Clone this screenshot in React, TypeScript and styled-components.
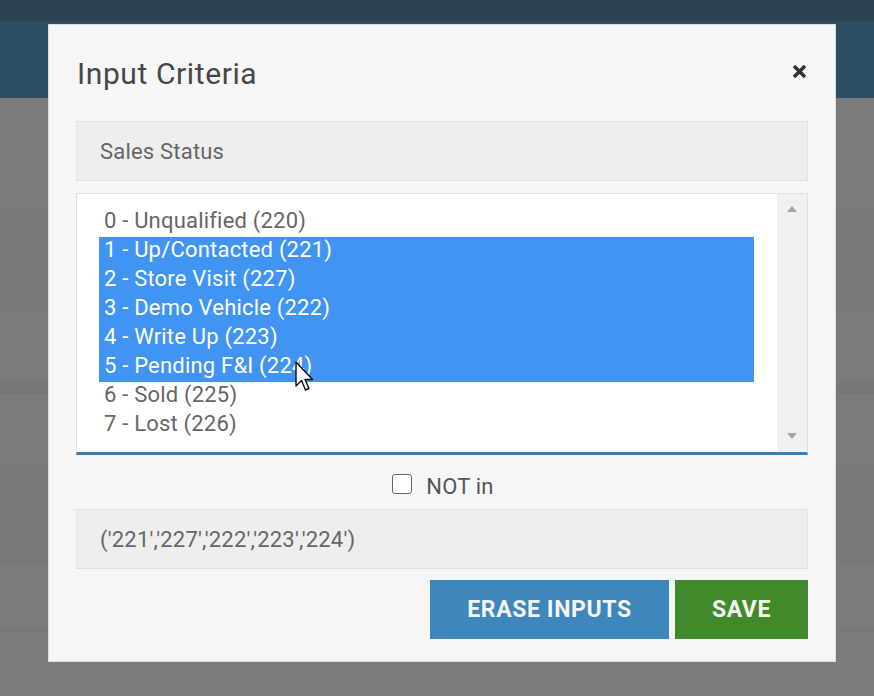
import React from "react";
import styled, { createGlobalStyle } from "styled-components";

const GlobalStyle = createGlobalStyle`
  html, body { margin: 0; padding: 0; }
  body {
    width: 874px;
    height: 696px;
    overflow: hidden;
    font-family: Roboto, "Liberation Sans", Arial, sans-serif;
    background: #7b7b7b;
  }
  * { box-sizing: border-box; }
`;

const Page = styled.div`
  position: relative;
  width: 874px;
  height: 696px;
  display: flex;
  flex-direction: column;
  background: #7b7b7b;
  overflow: hidden;
`;

const TopBar = styled.div`
  flex: 0 0 21px;
  background: #2c4252;
`;

const NavBar = styled.div`
  flex: 0 0 77px;
  background: #2b4e64;
`;

const BgRows = styled.div`
  flex: 1;
  display: flex;
  flex-direction: column;
  overflow: hidden;
`;

const BgRow = styled.div<{ $h: number; $shade: string }>`
  flex: 0 0 ${(p) => p.$h}px;
  background: ${(p) => p.$shade};
  border-bottom: 1px solid #757575;
`;

const Modal = styled.div`
  position: absolute;
  left: 48px;
  top: 24px;
  width: 788px;
  height: 638px;
  background: #f6f6f6;
  border: 1px solid #dcdcdc;
  padding: 0 27px 22px 27px;
  display: flex;
  flex-direction: column;
`;

const Header = styled.div`
  height: 96px;
  padding-top: 0;
  display: flex;
  align-items: center;
  justify-content: space-between;
`;

const Title = styled.h2`
  margin: 0;
  font-size: 30px;
  font-weight: 400;
  color: #474747;
  letter-spacing: 0.6px;
  padding-left: 1px;
`;

const Close = styled.button`
  border: 0;
  background: transparent;
  padding: 0;
  width: 16px;
  height: 16px;
  margin-right: 1px;
  margin-top: -4px;
  cursor: pointer;
  display: flex;
  align-items: center;
  justify-content: center;
`;

const GreyBox = styled.div`
  height: 60px;
  background: #eeeeee;
  border: 1px solid #e2e2e2;
  display: flex;
  align-items: center;
  padding-left: 23px;
  font-size: 22px;
  letter-spacing: 0.2px;
  color: #666;
`;

const ListBox = styled.div`
  margin-top: 12px;
  height: 262px;
  background: #ffffff;
  border: 1px solid #e0e0e0;
  border-bottom: 3px solid #3b7fb6;
  display: flex;
`;

const Options = styled.div`
  flex: 1;
  padding: 14px 23px 0 22px;
  display: flex;
  flex-direction: column;
`;

const Option = styled.div<{ $selected?: boolean }>`
  height: 29px;
  line-height: 25px;
  padding-left: 5px;
  font-size: 22px;
  letter-spacing: 0.2px;
  color: ${(p) => (p.$selected ? "#ffffff" : "#666")};
  background: ${(p) => (p.$selected ? "#4294f2" : "transparent")};
  white-space: nowrap;
`;

const Scrollbar = styled.div`
  width: 30px;
  background: #f1f1f1;
  display: flex;
  flex-direction: column;
  justify-content: space-between;
  align-items: center;
  padding: 12px 0 13px;
`;

const Arrow = styled.div<{ $down?: boolean }>`
  width: 0;
  height: 0;
  border-left: 5px solid transparent;
  border-right: 5px solid transparent;
  ${(p) =>
    p.$down
      ? "border-top: 6px solid #a6a6a6;"
      : "border-bottom: 6px solid #a6a6a6;"}
`;

const CheckRow = styled.label`
  height: 54px;
  padding-top: 8px;
  display: flex;
  align-items: center;
  justify-content: center;
  gap: 14px;
  font-size: 22px;
  letter-spacing: 0.2px;
  color: #555;
`;

const CheckBox = styled.span`
  width: 20px;
  height: 20px;
  border: 1.5px solid #666;
  border-radius: 3px;
  background: #fff;
  margin-left: 2px;
  margin-top: -4px;
`;

const Footer = styled.div`
  margin-top: 11px;
  display: flex;
  justify-content: flex-end;
  gap: 6px;
`;

const Button = styled.button<{ $color: string; $w: number }>`
  width: ${(p) => p.$w}px;
  height: 59px;
  border: 0;
  background: ${(p) => p.$color};
  color: #f4f4f4;
  font-family: Roboto, "Liberation Sans", Arial, sans-serif;
  font-size: 23px;
  font-weight: 700;
  letter-spacing: 0.6px;
  padding: 0;
  cursor: pointer;
`;

const Cursor = styled.svg`
  position: absolute;
  left: 294px;
  top: 360px;
`;

const items = [
  { t: "0 - Unqualified (220)", s: false },
  { t: "1 - Up/Contacted (221)", s: true },
  { t: "2 - Store Visit (227)", s: true },
  { t: "3 - Demo Vehicle (222)", s: true },
  { t: "4 - Write Up (223)", s: true },
  { t: "5 - Pending F&I (224)", s: true },
  { t: "6 - Sold (225)", s: false },
  { t: "7 - Lost (226)", s: false },
];

const bgRows = [
  { h: 115, c: "#7b7b7b" },
  { h: 98, c: "#7a7a7a" },
  { h: 73, c: "#7b7b7b" },
  { h: 10, c: "#777777" },
  { h: 71, c: "#7b7b7b" },
  { h: 96, c: "#7a7a7a" },
  { h: 71, c: "#7b7b7b" },
  { h: 80, c: "#7b7b7b" },
];

export default function App() {
  return (
    <>
      <GlobalStyle />
      <Page>
        <TopBar />
        <NavBar />
        <BgRows>
          {bgRows.map((r, i) => (
            <BgRow key={i} $h={r.h} $shade={r.c} />
          ))}
        </BgRows>
        <Modal>
          <Header>
            <Title>Input Criteria</Title>
            <Close aria-label="close">
              <svg width="15" height="15" viewBox="0 0 15 15">
                <path
                  d="M2 2 L13 13 M13 2 L2 13"
                  stroke="#333"
                  strokeWidth="3.4"
                  strokeLinecap="butt"
                />
              </svg>
            </Close>
          </Header>
          <GreyBox>Sales Status</GreyBox>
          <ListBox>
            <Options>
              {items.map((it) => (
                <Option key={it.t} $selected={it.s}>
                  {it.t}
                </Option>
              ))}
            </Options>
            <Scrollbar>
              <Arrow />
              <Arrow $down />
            </Scrollbar>
          </ListBox>
          <CheckRow>
            <CheckBox />
            NOT in
          </CheckRow>
          <GreyBox>('221','227','222','223','224')</GreyBox>
          <Footer>
            <Button $color="#3d87bd" $w={239}>
              ERASE INPUTS
            </Button>
            <Button $color="#418a2b" $w={133}>
              SAVE
            </Button>
          </Footer>
        </Modal>
        <Cursor width="22" height="36" viewBox="0 0 22 36">
          <path
            d="M2 2 L2 26 L7.5 20.5 L11.5 30 L15 28.5 L11 19.5 L18.5 19.5 Z"
            fill="#ffffff"
            stroke="#111"
            strokeWidth="1.4"
            strokeLinejoin="round"
          />
        </Cursor>
      </Page>
    </>
  );
}
